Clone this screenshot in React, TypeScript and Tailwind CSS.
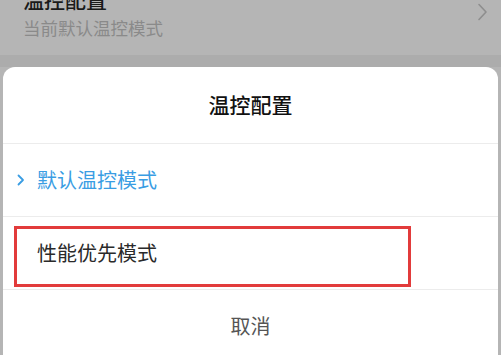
import React from 'react';

const font = { fontFamily: '"Noto Sans CJK SC", "Noto Sans", sans-serif' };

export default function App() {
  return (
    <div
      className="w-[501px] h-[355px] overflow-hidden bg-[#b5b5b5] flex flex-col"
      style={font}
    >
      {/* settings row behind the sheet */}
      <div className="relative h-[55px] pl-[23px] shrink-0">
        <div className="mt-[-13px] text-[21px] leading-[24px] text-[#1a1a1a] font-medium">温控配置</div>
        <div className="mt-[5px] text-[17.5px] leading-[24px] text-[#8a8a8a]">当前默认温控模式</div>
        <svg
          className="absolute left-[477px] top-[3px]"
          width="11"
          height="18"
          viewBox="0 0 11 18"
          fill="none"
        >
          <path d="M2 1.5 L9 9 L2 16.5" stroke="#8e8e8e" strokeWidth="1.6" strokeLinecap="round" strokeLinejoin="round" />
        </svg>
      </div>
      <div className="h-[12px] bg-[#acacac] shrink-0" />

      {/* bottom sheet */}
      <div className="flex-1 mx-[3px] bg-white rounded-t-[12px] flex flex-col">
        <div className="h-[76px] flex items-center justify-center text-[21px] text-[#111] font-medium">
          温控配置
        </div>
        <div className="h-px bg-[#ececec]" />
        <div className="h-[72px] flex items-center pl-[14px] text-[20px] text-[#3a9de3]">
          <svg width="8" height="12" viewBox="0 0 8 12" fill="none" className="mr-[12px]">
            <path d="M1.5 1.5 L6 6 L1.5 10.5" stroke="#3a9de3" strokeWidth="1.8" strokeLinecap="round" strokeLinejoin="round" />
          </svg>
          <span>默认温控模式</span>
        </div>
        <div className="h-px bg-[#ececec]" />
        <div className="relative h-[72px] flex items-center pl-[34px] text-[20px] text-[#2a2a2a]">
          <span>性能优先模式</span>
          <div className="absolute left-[11px] top-[9px] w-[397px] h-[61px] border-[3px] border-[#e23b3b]" />
        </div>
        <div className="h-px bg-[#ececec]" />
        <div className="flex-1 flex justify-center pt-[22px] text-[20px] text-[#555]">
          <span className="leading-[28px]">取消</span>
        </div>
      </div>
    </div>
  );
}
